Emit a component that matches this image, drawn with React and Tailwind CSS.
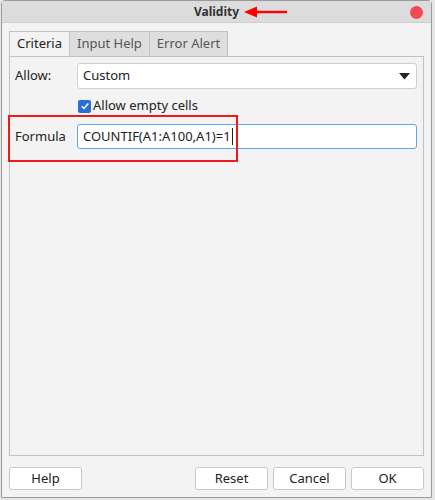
import React from 'react';

const font = { fontFamily: '"Noto Sans", "Open Sans", sans-serif' };

function Tab({ label, active }) {
  return (
    <div
      className={`h-[25px] px-[7px] flex items-center border border-[#c2c2c2] border-b-0 text-[13px] ${
        active ? 'bg-[#f3f3f3] text-[#222]' : 'bg-[#dedede] text-[#555] -ml-px'
      }`}
    >
      {label}
    </div>
  );
}

function Button({ label, className = '' }) {
  return (
    <button className={`h-[23px] w-[73px] bg-white border border-[#c9c9c9] rounded-[3px] text-[13px] text-[#222] ${className}`}>
      {label}
    </button>
  );
}

export default function App() {
  return (
    <div className="w-[435px] h-[500px] bg-[#e6e6e6] overflow-hidden" style={font}>
      <div className="ml-[1px] w-[431px] h-[498px] bg-[#f3f3f3] border border-[#9a9a9a] rounded-t-[4px] flex flex-col">
        {/* Title bar */}
        <div className="h-[22px] bg-[#dcdcdc] border-b border-[#cfcfcf] flex items-center relative">
          <div className="flex-1 flex justify-center items-center">
            <span className="text-[12px] font-bold text-[#333]">Validity</span>
          </div>
          <svg className="absolute left-[242px] top-[5px]" width="44" height="12" viewBox="0 0 44 12">
            <polygon points="0,6 13,0.5 13,11.5" fill="#f00" />
            <rect x="12" y="4.8" width="31" height="2.4" fill="#f00" />
          </svg>
          <div className="absolute right-[8px] top-[5px] w-[13px] h-[13px] rounded-full bg-[#ee4b55]" />
        </div>

        {/* Tabs */}
        <div className="mt-[8px] ml-[7px] flex">
          <Tab label="Criteria" active />
          <Tab label="Input Help" />
          <Tab label="Error Alert" />
        </div>

        {/* Panel */}
        <div className="mx-[7px] h-[400px] border border-[#c2c2c2] bg-[#f3f3f3] px-[5px] pt-[6px] text-[13px] text-[#222]">
          <div className="flex items-center h-[26px]">
            <span className="w-[62px]">Allow:</span>
            <div className="flex-1 h-[26px] bg-white border border-[#cfcfcf] rounded-[3px] flex items-center px-[5px] mr-[1px]">
              <span className="flex-1">Custom</span>
              <svg width="11" height="7" viewBox="0 0 11 7" className="mr-[1px]">
                <polygon points="0,0 11,0 5.5,6.5" fill="#222" />
              </svg>
            </div>
          </div>

          <div className="flex items-center h-[20px] mt-[7px] ml-[63px]">
            <div className="w-[13px] h-[13px] rounded-[2px] bg-[#2a6fd6] flex items-center justify-center">
              <svg width="10" height="10" viewBox="0 0 10 10">
                <path d="M1.8 5.2 L4 7.4 L8.3 2.4" stroke="white" strokeWidth="1.6" fill="none" />
              </svg>
            </div>
            <span className="ml-[2px]">Allow empty cells</span>
          </div>

          <div className="relative flex items-center h-[25px] mt-[8px]">
            <div className="absolute -left-[7px] -top-[9px] w-[230px] h-[47px] border-2 border-[#f01a1a] pointer-events-none" />
            <span className="w-[62px]">Formula</span>
            <div className="flex-1 h-[25px] bg-white border border-[#5ea6e8] rounded-[3px] flex items-center px-[5px] mr-[1px]">
              <span>COUNTIF(A1:A100,A1)=1</span>
              <span className="w-px h-[17px] bg-[#222] ml-[1px]" />
            </div>
          </div>
        </div>

        {/* Buttons */}
        <div className="flex items-center mt-[11px] mx-[7px]">
          <Button label="Help" />
          <div className="flex-1" />
          <Button label="Reset" />
          <Button label="Cancel" className="ml-[5px]" />
          <Button label="OK" className="ml-[5px]" />
        </div>
      </div>
    </div>
  );
}
